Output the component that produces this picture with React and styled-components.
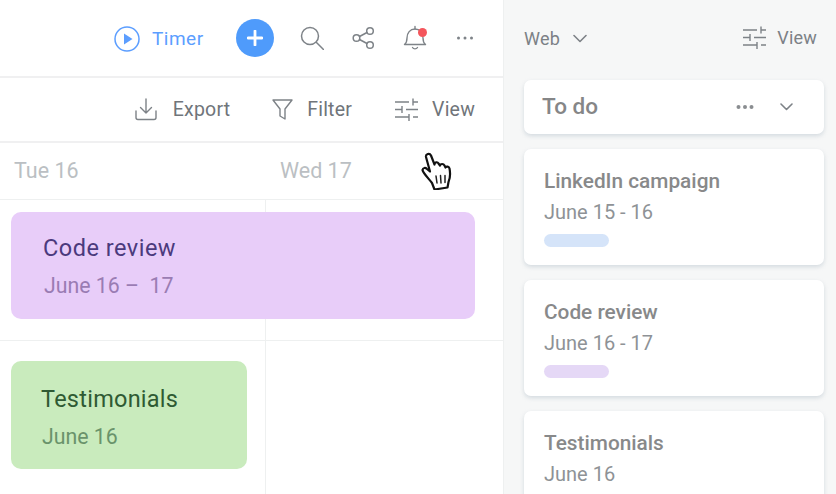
import React from "react";
import styled, { createGlobalStyle } from "styled-components";

const Global = createGlobalStyle`
  html, body { margin: 0; padding: 0; background: #fff; }
  body { font-family: Roboto, "Liberation Sans", sans-serif; -webkit-font-smoothing: antialiased; }
`;

const Page = styled.div`
  width: 836px; height: 494px; overflow: hidden; display: flex; background: #fff;
`;
const Main = styled.section`
  width: 503px; flex: none; display: flex; flex-direction: column; position: relative;
`;
const TopBar = styled.header`
  height: 78px; box-sizing: border-box; border-bottom: 2px solid #f0f0f1; display: flex; align-items: center;
  padding: 0 27px 0 114px; flex: none; margin-bottom: -1px;
`;
const TimerLink = styled.a`
  display: flex; align-items: center; gap: 12px; color: #5c9eff; font-size: 19px; letter-spacing: 0.5px; width: 122px; margin-top: 1px;
`;
const AddButton = styled.button`
  width: 38px; height: 38px; border-radius: 50%; background: #4f9bfb; border: 0; padding: 0; display: flex; align-items: center; justify-content: center; flex: none;
`;
const TopIcons = styled.div`
  display: flex; align-items: center; margin-left: 26px; gap: 28px;
`;
const Bell = styled.span`
  position: relative; display: flex;
`;
const Dot = styled.i`
  position: absolute; right: 0px; top: 3px; width: 9px; height: 9px; border-radius: 50%; background: #f4565c;
`;
const ToolBar = styled.div`
  height: 66px; box-sizing: border-box; border-bottom: 2px solid #f0f0f1; display: flex; align-items: center; justify-content: flex-end; padding: 0 28px 0 0; gap: 42px; flex: none;
`;
const Tool = styled.span`
  display: flex; align-items: center; gap: ${p => p.$gap || 15}px; color: #70757a; font-size: 19.5px; letter-spacing: 0.2px;
`;
const DateRow = styled.div`
  height: 57px; box-sizing: border-box; border-bottom: 1px solid #eef0f0; display: grid; grid-template-columns: 266px 1fr; align-items: center; color: #bbbfc3; font-size: 21.5px; flex: none; padding: 0 0 2px 14px;
`;
const DateLabel = styled.span``;
const Grid = styled.div`
  flex: 1; display: grid; grid-template-columns: 266px 1fr; grid-template-rows: 141px 1fr;
`;
const Cell = styled.div`
  grid-column: ${p => p.$c}; grid-row: ${p => p.$r}; border-bottom: ${p => p.$r === 1 ? "1px solid #eef0f0" : "0"}; border-right: ${p => p.$c === 1 ? "1px solid #eef0f0" : "0"};
  box-sizing: border-box;
`;
const Event = styled.article`
  grid-row: ${p => p.$r}; grid-column: ${p => p.$span}; background: ${p => p.$bg}; border-radius: 10px; margin: ${p => p.$m}; height: ${p => p.$h}px; box-sizing: border-box; padding: ${p => p.$pad}; z-index: 1;
`;
const EventTitle = styled.div`
  font-size: 23.5px; line-height: 30px; color: ${p => p.$c}; letter-spacing: ${p => p.$ls}px;
`;
const EventDate = styled.div`
  font-size: 21.3px; line-height: 26px; margin-top: 10px; color: ${p => p.$c}; margin-left: ${p => p.$ml || 0}px; white-space: pre;
`;
const Side = styled.aside`
  flex: 1; background: #f6f7f7; border-left: 1px solid #eef0f0; box-sizing: border-box; padding: 0 12px 0 20px; display: flex; flex-direction: column; min-width: 0;
`;
const SideHead = styled.div`
  height: 80px; box-sizing: border-box; padding: 0 7px 5px 0; display: flex; align-items: center; justify-content: space-between; flex: none; color: #7c8186; font-size: 18px; letter-spacing: 0.2px;
`;
const WebPick = styled.span`
  display: flex; align-items: center; gap: 13px; margin-top: 2px;
`;
const ColumnHead = styled.div`
  height: 54px; flex: none; background: #fff; border-radius: 7px; box-shadow: 0 2px 4px rgba(170,185,195,.45); display: flex; align-items: center; padding: 0 31px 0 18px; gap: 26px; margin: 0 0 15px; font-size: 22.5px; font-weight: 500; color: #858687;
`;
const ColumnTitle = styled.span`
  flex: 1; margin-top: -2px;
`;
const Card = styled.div`
  height: 116px; flex: none; background: #fff; border-radius: 7px; box-shadow: 0 2px 4px rgba(170,185,195,.45); padding: 18px 20px 0; box-sizing: border-box; margin-bottom: 15px;
`;
const CardTitle = styled.div`
  font-size: 20.8px; line-height: 28px; font-weight: 500; color: #88898a;
`;
const CardDate = styled.div`
  font-size: 20px; line-height: 26px; margin-top: 4px; color: #8e9296;
`;
const Tag = styled.div`
  width: 65px; height: 13px; border-radius: 7px; background: ${p => p.$c}; margin-top: 9px;
`;
const Cursor = styled.svg`
  position: absolute; left: 421px; top: 152px; z-index: 3;
`;
const ViewText = styled.span`
  font-size: 18px; color: #7c8186;
`;

const Line = { fill: "none", stroke: "currentColor", strokeLinecap: "round", strokeLinejoin: "round" };

const Sliders = ({ c = "#7d8287", s = 25 }) => (
  <svg width={s} height={s} viewBox="0 0 25 25" style={{ color: c }} {...Line} strokeWidth="1.4" strokeLinecap="butt">
    <path d="M1 5h14M19 5h5M19 1.500v7M1 12.500h7M12 12.500h12M8 9v7M1 20h14M19 20h5M15 17v7" />
  </svg>
);

export default function App() {
  return (
    <Page>
      <Global />
      <Main>
        <TopBar>
          <TimerLink>
            <svg width="26" height="26" viewBox="0 0 26 26" fill="none">
              <circle cx="13" cy="13" r="12" stroke="#5c9eff" strokeWidth="1.5" />
              <path d="M10 7.500l8.500 5.500-8.500 5.500z" fill="#5c9eff" />
            </svg>
            Timer
          </TimerLink>
          <AddButton>
            <svg width="16" height="16" viewBox="0 0 16 16"><path d="M8 1v14M1 8h14" stroke="#fff" strokeWidth="2.8" strokeLinecap="round" /></svg>
          </AddButton>
          <TopIcons>
            <svg width="24" height="24" viewBox="0 0 24 24" style={{ color: "#7e8388" }} {...Line} strokeWidth="1.5">
              <circle cx="10" cy="10" r="8.500" /><path d="M16.500 16.500l7 7" />
            </svg>
            <svg width="23" height="24" viewBox="0 0 23 24" style={{ color: "#7e8388" }} {...Line} strokeWidth="1.5">
              <circle cx="18" cy="5" r="3.300" /><circle cx="4.500" cy="12" r="3.300" /><circle cx="18" cy="19" r="3.300" />
              <path d="M7.500 10.500l7.500-4M7.500 13.500l7.500 4" />
            </svg>
            <Bell>
              <svg width="24" height="26" viewBox="0 0 24 26" style={{ color: "#7e8388" }} {...Line} strokeWidth="1.4">
                <path d="M1.500 19.500c2-1.500 2.500-3 2.500-6.500 0-5 3-9 8-9s8 4 8 9c0 3.500.5 5 2.500 6.500z" /><path d="M12 1.500v2.500M9.500 22.500c1 1.800 4 1.800 5 0" />
              </svg>
              <Dot />
            </Bell>
            <svg width="18" height="6" viewBox="0 0 18 6" fill="#7e8388" style={{ marginLeft: 1 }}>
              <circle cx="2.500" cy="3" r="1.500" /><circle cx="9" cy="3" r="1.500" /><circle cx="15.500" cy="3" r="1.500" />
            </svg>
          </TopIcons>
        </TopBar>
        <ToolBar>
          <Tool $gap={16}>
            <svg width="22" height="23" viewBox="0 0 22 23" style={{ color: "#7d8287" }} {...Line} strokeWidth="1.4">
              <path d="M1 13v6.500c0 1.200.8 2 2 2h16c1.200 0 2-.8 2-2V13M11 1v14M5.500 9.500L11 15l5.500-5.500" />
            </svg>
            Export
          </Tool>
          <Tool $gap={14}>
            <svg width="21" height="21" viewBox="0 0 21 21" style={{ color: "#7d8287" }} {...Line} strokeWidth="1.4">
              <path d="M1 1h19l-7 9v10l-5-3v-7z" />
            </svg>
            Filter
          </Tool>
          <Tool $gap={13}><Sliders />View</Tool>
        </ToolBar>
        <DateRow><DateLabel>Tue 16</DateLabel><DateLabel>Wed 17</DateLabel></DateRow>
        <Grid>
          <Cell $c={1} $r={1} /><Cell $c={2} $r={1} /><Cell $c={1} $r={2} /><Cell $c={2} $r={2} />
          <Event $r={1} $span="1 / 3" $bg="#e8cdf9" $h={107} $m="12px 28px 0 11px" $pad="21px 32px">
            <EventTitle $c="#4b3a7d" $ls={0.5}>Code review</EventTitle>
            <EventDate $c="#9a7cb3" $ml={1}>June 16 –  17</EventDate>
          </Event>
          <Event $r={2} $span="1 / 2" $bg="#c9ebbd" $h={108} $m="20px 19px 0 11px" $pad="23px 30px">
            <EventTitle $c="#2f5a33" $ls={0.25}>Testimonials</EventTitle>
            <EventDate $c="#6a936b" $ml={1}>June 16</EventDate>
          </Event>
        </Grid>
        <Cursor width="33" height="38" viewBox="0 0 33 38">
          <path d="M11 31C8 27 2 21 1.500 18c.5-2.500 3-2.500 4.500-1L9 19.500 5 5c-.5-3 3.500-4.500 5-1.500l3.500 9c0-2.500 3-3 4-1l1.500 2c.5-2 3.500-2 4.500 0l1 2c1-1.500 3.500-1 4 1 1 5 .5 10-1 13.500l-1 5.500-13 2z" fill="#fff" stroke="#111" strokeWidth="2.200" strokeLinejoin="round" />
          <path d="M15 24l1 7M19.500 23.500l.5 7.500M24 23.500l0 7" stroke="#222" strokeWidth="1.500" strokeLinecap="round" />
        </Cursor>
      </Main>
      <Side>
        <SideHead>
          <WebPick>Web
            <svg width="14" height="9" viewBox="0 0 14 9" style={{ color: "#7d8287" }} {...Line} strokeWidth="1.6"><path d="M1 1.500l6 6 6-6" /></svg>
          </WebPick>
          <Tool $gap={10}><Sliders /><ViewText>View</ViewText></Tool>
        </SideHead>
        <ColumnHead>
          <ColumnTitle>To do</ColumnTitle>
          <svg width="18" height="6" viewBox="0 0 18 6" fill="#8a8d90"><circle cx="2.500" cy="3" r="2" /><circle cx="9" cy="3" r="2" /><circle cx="15.500" cy="3" r="2" /></svg>
          <svg width="13" height="8" viewBox="0 0 13 8" style={{ color: "#7d8287" }} {...Line} strokeWidth="1.6"><path d="M1 1l5.500 5.500L12 1" /></svg>
        </ColumnHead>
        <Card><CardTitle>LinkedIn campaign</CardTitle><CardDate>June 15 - 16</CardDate><Tag $c="#d5e4f9" /></Card>
        <Card><CardTitle>Code review</CardTitle><CardDate>June 16 - 17</CardDate><Tag $c="#e5d8f6" /></Card>
        <Card><CardTitle>Testimonials</CardTitle><CardDate>June 16</CardDate></Card>
      </Side>
    </Page>
  );
}
